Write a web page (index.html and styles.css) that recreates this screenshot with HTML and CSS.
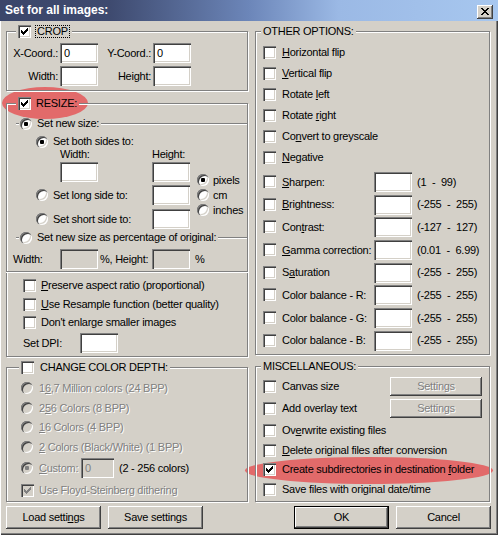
FILE: index.html
```html
<!DOCTYPE html>
<html>
<head>
<meta charset="utf-8">
<title>Set for all images</title>
<link rel="stylesheet" href="styles.css">
</head>
<body>
<div class="dialog">
  <div class="titlebar">
    <span class="title">Set for all images:</span>
    <span class="close"><svg width="16" height="14" viewBox="0 0 16 14"><rect width="16" height="14" fill="#404040"/><rect width="15" height="13" fill="#fff"/><rect x="1" y="1" width="14" height="12" fill="#808080"/><rect x="1" y="1" width="13" height="11" fill="#d4d0c8"/><path fill="#000" d="M4 3h2v1H4zM10 3h2v1h-2zM5 4h2v1H5zM9 4h2v1H9zM6 5h4v1H6zM7 6h2v1H7zM6 7h4v1H6zM5 8h2v1H5zM9 8h2v1H9zM4 9h2v1H4zM10 9h2v1h-2z"/></svg></span>
  </div>
  <div class="main">
    <div class="col col-left">
      <div class="group g-crop">
        <div class="legend lg-crop"><span class="cb"><svg width="13" height="13" viewBox="0 0 13 13"><path d="M3 5h1v3H3zM4 6h1v3H4zM5 7h1v3H5zM6 6h1v3H6zM7 5h1v3H7zM8 4h1v3H8zM9 3h1v3H9z"/></svg></span><span class="focus">CROP</span></div>
        <div class="crop-row r1"><span class="lbl">X-Coord.:</span><span class="fld">0</span><span class="lbl">Y-Coord.:</span><span class="fld">0</span></div>
        <div class="crop-row r2"><span class="lbl">Width:</span><span class="fld"></span><span class="lbl">Height:</span><span class="fld"></span></div>
      </div>

      <div class="group g-resize">
        <div class="legend lg-resize"><span class="cb"><svg width="13" height="13" viewBox="0 0 13 13"><path d="M3 5h1v3H3zM4 6h1v3H4zM5 7h1v3H5zM6 6h1v3H6zM7 5h1v3H7zM8 4h1v3H8zM9 3h1v3H9z"/></svg></span><span>RESIZE:</span></div>
        <div class="subline sl1"><span class="ln short"></span><span class="rb on"></span><span class="stxt">Set new size:</span><span class="ln grow"></span></div>
        <div class="opt"><span class="rb on"></span><span>Set both sides to:</span></div>
        <div class="whl"><span>Width:</span><span>Height:</span></div>
        <div class="sizegrid">
          <div class="sizerows">
            <div class="srow s1"><span class="fld"></span><span class="fld f2"></span></div>
            <div class="srow sr s2"><span class="rb"></span><span class="stx">Set long side to:</span><span class="fld"></span></div>
            <div class="srow sr s3"><span class="rb"></span><span class="stx">Set short side to:</span><span class="fld"></span></div>
          </div>
          <div class="units">
            <div class="unit"><span class="rb on"></span><span>pixels</span></div>
            <div class="unit"><span class="rb"></span><span>cm</span></div>
            <div class="unit"><span class="rb"></span><span>inches</span></div>
          </div>
        </div>
        <div class="subline sl2"><span class="ln short"></span><span class="rb"></span><span class="stxt">Set new size as percentage of original:</span><span class="ln grow"></span></div>
        <div class="pct"><span>Width:</span><span class="fld dis"></span><span class="pl">%, Height:</span><span class="fld dis"></span><span class="pl2">%</span></div>
        <div class="sep"></div>
        <div class="crow c1"><span class="cb"></span><span><u>P</u>reserve aspect ratio (proportional)</span></div>
        <div class="crow c2"><span class="cb"></span><span><u>U</u>se Resample function (better quality)</span></div>
        <div class="crow c3"><span class="cb"></span><span>Don't enlarge smaller images</span></div>
        <div class="dpi"><span class="dpi-l">Set DPI:</span><span class="fld"></span></div>
      </div>

      <div class="group g-ccd">
        <div class="legend lg-ccd"><span class="cb"></span><span>CHANGE COLOR DEPTH:</span></div>
        <div class="rrow q1"><span class="rb dis"></span><span class="dt">1<u>6</u>,7 Million colors (24 BPP)</span></div>
        <div class="rrow q2"><span class="rb dis"></span><span class="dt">2<u>5</u>6 Colors (8 BPP)</span></div>
        <div class="rrow q3"><span class="rb dis"></span><span class="dt"><u>1</u>6 Colors (4 BPP)</span></div>
        <div class="rrow q4"><span class="rb dis"></span><span class="dt"><u>2</u> Colors (Black/White) (1 BPP)</span></div>
        <div class="rrow custom"><span class="rb dis on"></span><span class="dt custom-l"><u>C</u>ustom:</span><span class="fld dis cfld">0</span><span class="crange">(2 - 256 colors)</span></div>
        <div class="rrow floyd"><span class="cb dis"><svg width="13" height="13" viewBox="0 0 13 13"><path d="M3 5h1v3H3zM4 6h1v3H4zM5 7h1v3H5zM6 6h1v3H6zM7 5h1v3H7zM8 4h1v3H8zM9 3h1v3H9z"/></svg></span><span class="dt">Use Floyd-Steinberg dithering</span></div>
      </div>

      <div class="btns">
        <span class="btn">Load setti<u>n</u>gs</span>
        <span class="btn">Save settings</span>
      </div>
    </div>

    <div class="col col-right">
      <div class="group g-other">
        <div class="legend lg-text"><span>OTHER OPTIONS:</span></div>
        <div class="orow"><span class="cb"></span><span><u>H</u>orizontal flip</span></div>
        <div class="orow"><span class="cb"></span><span><u>V</u>ertical flip</span></div>
        <div class="orow"><span class="cb"></span><span>Rotate <u>l</u>eft</span></div>
        <div class="orow"><span class="cb"></span><span>Rotate <u>r</u>ight</span></div>
        <div class="orow"><span class="cb"></span><span>Co<u>n</u>vert to greyscale</span></div>
        <div class="orow"><span class="cb"></span><span><u>N</u>egative</span></div>
        <div class="irow first"><span class="cb"></span><span class="itx"><u>S</u>harpen:</span><span class="fld"></span><span class="rng">(1&nbsp; -&nbsp; 99)</span></div>
        <div class="irow"><span class="cb"></span><span class="itx"><u>B</u>rightness:</span><span class="fld"></span><span class="rng">(-255&nbsp; -&nbsp; 255)</span></div>
        <div class="irow"><span class="cb"></span><span class="itx">Con<u>t</u>rast:</span><span class="fld"></span><span class="rng">(-127&nbsp; -&nbsp; 127)</span></div>
        <div class="irow"><span class="cb"></span><span class="itx"><u>G</u>amma correction:</span><span class="fld"></span><span class="rng">(0.01&nbsp; -&nbsp; 6.99)</span></div>
        <div class="irow"><span class="cb"></span><span class="itx">S<u>a</u>turation</span><span class="fld"></span><span class="rng">(-255&nbsp; -&nbsp; 255)</span></div>
        <div class="irow"><span class="cb"></span><span class="itx">Color balance - R:</span><span class="fld"></span><span class="rng">(-255&nbsp; -&nbsp; 255)</span></div>
        <div class="irow"><span class="cb"></span><span class="itx">Color balance - G:</span><span class="fld"></span><span class="rng">(-255&nbsp; -&nbsp; 255)</span></div>
        <div class="irow"><span class="cb"></span><span class="itx">Color balance - B:</span><span class="fld"></span><span class="rng">(-255&nbsp; -&nbsp; 255)</span></div>
      </div>

      <div class="group g-misc">
        <div class="legend lg-text"><span>MISCELLANEOUS:</span></div>
        <div class="mrow m1"><span class="cb"></span><span>Canvas size</span><span class="btn sbtn dis-b">Settings</span></div>
        <div class="mrow m2"><span class="cb"></span><span>Add overlay text</span><span class="btn sbtn dis-b">Settings</span></div>
        <div class="orow k3"><span class="cb"></span><span>Ov<u>e</u>rwrite existing files</span></div>
        <div class="orow k4"><span class="cb"></span><span><u>D</u>elete original files after conversion</span></div>
        <div class="orow k5"><span class="cb"><svg width="13" height="13" viewBox="0 0 13 13"><path d="M3 5h1v3H3zM4 6h1v3H4zM5 7h1v3H5zM6 6h1v3H6zM7 5h1v3H7zM8 4h1v3H8zM9 3h1v3H9z"/></svg></span><span>Create subdirectories in destination <u>f</u>older</span></div>
        <div class="orow k6"><span class="cb"></span><span>Save files with original date/time</span></div>
      </div>

      <div class="btns btns-right">
        <span class="btn def">OK</span>
        <span class="btn">Cancel</span>
      </div>
    </div>
  </div>
  <div class="mark mark-resize"></div>
  <div class="mark mark-create"></div>
</div>
</body>
</html>
```

FILE: styles.css
```css
* { box-sizing: border-box; margin: 0; padding: 0; }
html, body { width: 498px; height: 535px; overflow: hidden; }
body {
  background: #d4d0c8;
  font-family: "Liberation Sans", Arial, sans-serif;
  font-size: 11px;
  line-height: 13px;
  letter-spacing: -0.25px;
  color: #000;
}
u { text-decoration: underline; text-underline-offset: 1px; }

.dialog {
  position: relative;
  z-index: 0;
  width: 498px;
  height: 535px;
  background: #d4d0c8;
  box-shadow: inset 1px 0 0 #fff, inset -1px -1px 0 #404040, inset -2px -2px 0 #808080;
}

.titlebar {
  height: 21px;
  display: flex;
  justify-content: space-between;
  align-items: center;
  padding: 0 5px;
  background: linear-gradient(90deg, #3b466a 0%, #3e4a6f 22%, #6c86b9 50%, #9bb9e5 68%, #a7c7ef 100%);
}
.title { color: #fff; font-weight: bold; font-size: 12px; letter-spacing: 0; }
.close { align-self: flex-start; margin-top: 5px; width: 16px; height: 14px; }
.close svg { display: block; }

.main {
  display: grid;
  grid-template-columns: 243px 236px;
  column-gap: 6px;
  padding: 10px 0 0 6px;
}
.col { display: flex; flex-direction: column; }

.group {
  position: relative;
  display: flex;
  flex-direction: column;
  border: 1px solid #808080;
  box-shadow: 1px 1px 0 #fff, inset 1px 1px 0 #fff;
}
.col-left .group { width: 242px; }
.col-right .group { width: 235px; }

.legend {
  display: flex;
  align-items: center;
  align-self: flex-start;
  height: 13px;
  margin-top: -7px;
  padding: 0 2px;
  background: #d4d0c8;
  white-space: nowrap;
}

/* controls */
.cb {
  position: relative;
  flex: none;
  width: 13px;
  height: 13px;
  background: #fff;
  box-shadow: inset 1px 1px 0 #808080, inset 2px 2px 0 #404040, inset -1px -1px 0 #fff, inset -2px -2px 0 #d4d0c8;
}
.cb svg { display: block; fill: #000; }
.cb.dis { background: #d4d0c8; }
.cb.dis svg { fill: #808080; }

.rb {
  position: relative;
  flex: none;
  width: 12px;
  height: 12px;
  border-radius: 50%;
  background: #fff;
  box-shadow: inset 1px 1px 0 #808080, inset 2px 2px 0 #404040, inset -1px -1px 0 #fff, inset -2px -2px 0 #d4d0c8;
}
.rb.on::after {
  content: "";
  position: absolute;
  left: 4px;
  top: 4px;
  width: 4px;
  height: 4px;
  border-radius: 1px;
  background: #000;
}
.rb.dis { background: #d4d0c8; }
.rb.dis.on::after { background: #808080; }

.fld {
  flex: none;
  width: 38px;
  height: 20px;
  padding: 3px 0 0 4px;
  line-height: 14px;
  background: #fff;
  box-shadow: inset 1px 1px 0 #808080, inset 2px 2px 0 #404040, inset -1px -1px 0 #fff, inset -2px -2px 0 #d4d0c8;
}
.fld.dis { background: #d4d0c8; color: #808080; }

.dt { color: #808080; text-shadow: 1px 1px 0 #fff; }

.btn {
  flex: none;
  width: 95px;
  height: 23px;
  display: flex;
  align-items: center;
  justify-content: center;
  font-size: 11px;
  box-shadow: inset -1px -1px 0 #404040, inset 1px 1px 0 #fff, inset -2px -2px 0 #808080, inset 2px 2px 0 #d4d0c8;
}
.btn.def { border: 1px solid #000; }
.btn.dis-b { color: #808080; text-shadow: 1px 1px 0 #fff; }

.ln { height: 2px; border-top: 1px solid #808080; border-bottom: 1px solid #fff; align-self: flex-start; margin-top: 6px; }

/* CROP */
.g-crop { height: 60px; }
.lg-crop { margin-left: 9px; gap: 4px; }
.focus { border: 1px dotted #000; line-height: 11px; padding: 0 1px; }
.crop-row {
  display: grid;
  grid-template-columns: 51px 38px 51px 38px;
  column-gap: 2px;
  align-items: center;
  height: 20px;
}
.crop-row .lbl { text-align: right; }
.crop-row.r1 { margin-top: 5px; }
.crop-row.r2 { margin-top: 3px; }

/* RESIZE */
.g-resize { height: 254px; margin-top: 12px; }
.lg-resize { margin-left: 9px; gap: 5px; background: #e26a6a; }
.subline { display: flex; align-items: center; height: 13px; padding-left: 9px; }
.subline .short { width: 3px; margin-right: 1px; }
.subline .stxt { margin-left: 5px; margin-right: 2px; white-space: nowrap; }
.subline .grow { flex: 1; }
.sl1 { margin-top: 7px; }
.opt { display: flex; align-items: center; gap: 5px; height: 13px; padding-left: 29px; margin-top: 5px; }
.whl { display: grid; grid-template-columns: 92px auto; height: 12px; line-height: 12px; padding-left: 53px; }
.sizegrid { display: grid; grid-template-columns: 190px auto; margin-top: 2px; }
.srow { display: flex; align-items: center; height: 20px; }
.srow.s1 { padding-left: 53px; }
.srow.s1 .f2 { margin-left: 54px; }
.srow.sr { display: grid; grid-template-columns: 12px 104px 38px; padding-left: 29px; }
.srow .stx { padding-left: 5px; }
.srow.s2 { margin-top: 3px; }
.srow.s3 { margin-top: 4px; }
.units { display: flex; flex-direction: column; gap: 3px; padding-top: 12px; }
.unit { display: flex; align-items: center; gap: 4px; height: 12px; }
.sl2 { margin-top: 2px; }
.pct {
  display: grid;
  grid-template-columns: 47px 38px 54px 38px auto;
  align-items: center;
  height: 20px;
  padding-left: 6px;
  margin-top: 5px;
}
.pct .pl { padding-left: 2px; }
.pct .pl2 { padding-left: 5px; }
.sep { height: 2px; border-top: 1px solid #808080; border-bottom: 1px solid #fff; margin: 2px -1px 0 -1px; }
.crow { display: flex; align-items: flex-start; gap: 5px; height: 13px; padding-left: 16px; }
.crow.c1 { margin-top: 6px; }
.crow.c2 { margin-top: 6px; }
.crow.c3 { margin-top: 5px; }
.dpi { display: flex; align-items: center; height: 20px; padding-left: 16px; margin-top: 4px; }
.dpi-l { width: 57px; }

/* COLOR DEPTH */
.g-ccd { height: 135px; margin-top: 10px; }
.lg-ccd { margin-left: 12px; gap: 6px; }
.rrow { display: flex; align-items: center; gap: 6px; height: 12px; padding-left: 14px; white-space: nowrap; }
.rrow.q1 { margin-top: 8px; }
.rrow.q2 { margin-top: 8px; }
.rrow.q3 { margin-top: 7px; }
.rrow.q4 { margin-top: 8px; }
.rrow.custom { height: 20px; margin-top: 5px; gap: 0; }
.custom .custom-l { width: 42px; margin-left: 6px; }
.custom .cfld { width: 33px; }
.custom .crange { margin-left: 5px; }
.rrow.floyd { height: 13px; margin-top: 6px; gap: 5px; }

.btns { display: flex; gap: 7px; margin-top: 4px; }
.btns-right { padding-left: 39px; }

/* OTHER OPTIONS */
.g-other { height: 324px; }
.lg-text { margin-left: 5px; }
.orow { display: flex; align-items: flex-start; gap: 6px; height: 13px; padding-left: 7px; margin-top: 8px; white-space: nowrap; }
.irow {
  display: grid;
  grid-template-columns: 13px 98px 38px auto;
  align-items: center;
  height: 20px;
  padding-left: 7px;
  margin-top: 2.7px;
  white-space: nowrap;
}
.irow.first { margin-top: 8px; }
.irow .cb { align-self: start; margin-top: 3px; }
.irow .itx { padding-left: 6px; }
.irow .rng { padding-left: 5px; }

/* MISC */
.g-misc { height: 136px; margin-top: 11px; }
.mrow { display: flex; align-items: center; gap: 6px; height: 19px; padding-left: 7px; white-space: nowrap; }
.mrow.m1 { margin-top: 4px; }
.mrow.m2 { margin-top: 3px; }
.sbtn { width: 92px; height: 19px; margin-left: auto; margin-right: 7px; font-size: 11px; }
.orow.k3 { margin-top: 6px; }
.orow.k4 { margin-top: 7px; }
.orow.k5 { margin-top: 6px; }
.orow.k6 { margin-top: 7px; }

/* annotation ellipses */
.mark { position: absolute; z-index: -1; border-radius: 50%; background: #e26a6a; }
.mark-resize { left: 2px; top: 87px; width: 86px; height: 32px; }
.mark-create { left: 245px; top: 457px; width: 248px; height: 27px; }
```
